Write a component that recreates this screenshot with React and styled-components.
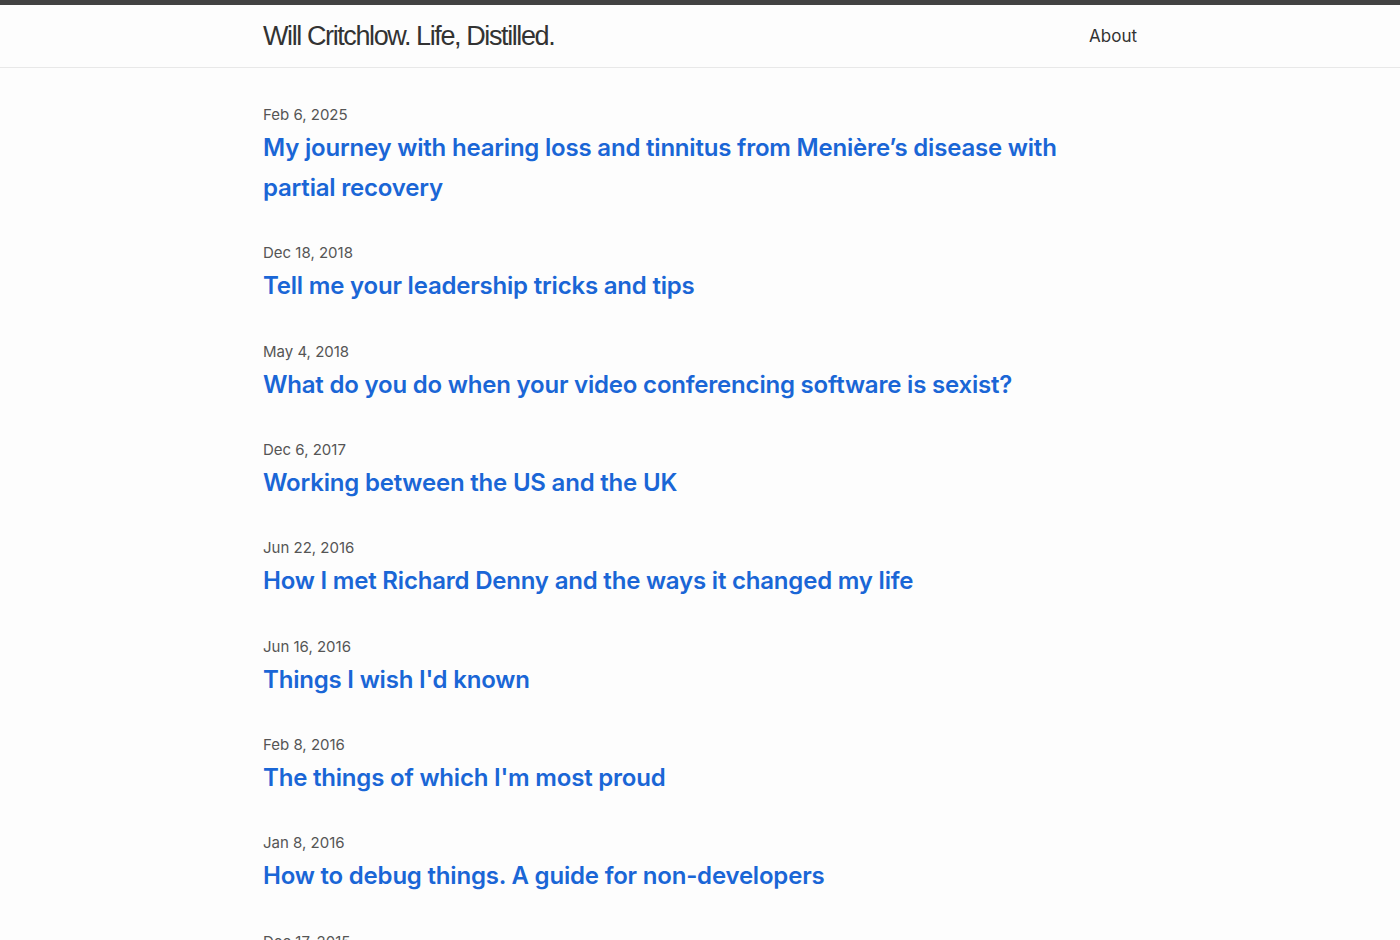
import React from "react";
import styled, { createGlobalStyle } from "styled-components";

const posts = [
  { date: "Feb 6, 2025", title: "My journey with hearing loss and tinnitus from Menière’s disease with partial recovery" },
  { date: "Dec 18, 2018", title: "Tell me your leadership tricks and tips" },
  { date: "May 4, 2018", title: "What do you do when your video conferencing software is sexist?" },
  { date: "Dec 6, 2017", title: "Working between the US and the UK" },
  { date: "Jun 22, 2016", title: "How I met Richard Denny and the ways it changed my life" },
  { date: "Jun 16, 2016", title: "Things I wish I'd known" },
  { date: "Feb 8, 2016", title: "The things of which I'm most proud" },
  { date: "Jan 8, 2016", title: "How to debug things. A guide for non-developers" },
  { date: "Dec 17, 2015", title: "Some things I learned in 2015" },
];

const App = () => {
  return (
    <>
      <GlobalStyle />
      <Header>
        <Wrapper>
          <SiteTitle href="#">Will Critchlow. Life, Distilled.</SiteTitle>
          <Nav>
            <NavLink href="#">About</NavLink>
          </Nav>
        </Wrapper>
      </Header>
      <Main>
        <PostList>
          {posts.map((p) => (
            <Post key={p.date}>
              <PostDate>{p.date}</PostDate>
              <PostTitle href="#">{p.title}</PostTitle>
            </Post>
          ))}
        </PostList>
      </Main>
    </>
  );
};

export default App;

const GlobalStyle = createGlobalStyle`
  html, body {
    margin: 0;
    padding: 0;
    background: #fdfdfd;
    font-family: "Inter", "Liberation Sans", sans-serif;
    color: #111;
  }
`;

const Header = styled.header`
  border-top: 5px solid #424242;
  border-bottom: 1px solid #e8e8e8;
  height: 62px;
`;

const Wrapper = styled.div`
  width: 874px;
  margin: 0 auto;
  height: 100%;
  display: flex;
  align-items: center;
  justify-content: space-between;
`;

const SiteTitle = styled.a`
  font-family: "Liberation Sans", sans-serif;
  font-size: 27px;
  letter-spacing: -1.4px;
  color: #333;
  text-decoration: none;
`;

const Nav = styled.nav`
  display: flex;
`;

const NavLink = styled.a`
  font-size: 17px;
  color: #333;
  text-decoration: none;
`;

const Main = styled.main`
  width: 874px;
  margin: 0 auto;
  padding-top: 36px;
`;

const PostList = styled.ul`
  list-style: none;
  margin: 0;
  padding: 0;
  display: flex;
  flex-direction: column;
  gap: 34.33px;
`;

const Post = styled.li`
  display: flex;
  flex-direction: column;
  gap: 2px;
`;

const PostDate = styled.span`
  font-size: 15px;
  line-height: 22px;
  color: #555;
`;

const PostTitle = styled.a`
  font-size: 24px;
  line-height: 40px;
  font-weight: 600;
  letter-spacing: -0.2px;
  color: #1a66d6;
  text-decoration: none;
  max-width: 820px;
`;
